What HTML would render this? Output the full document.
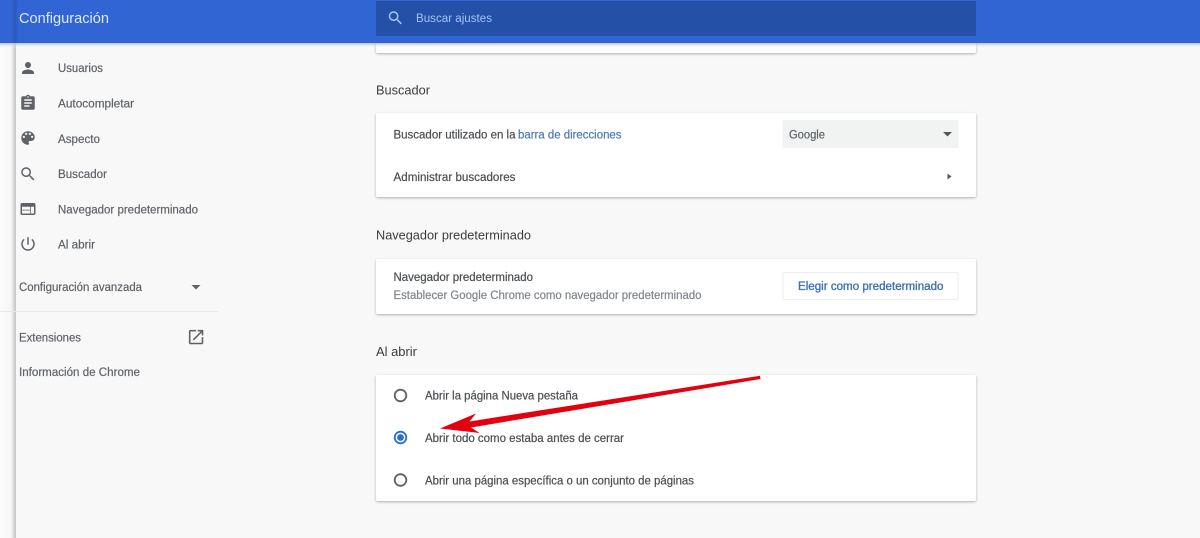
<!DOCTYPE html>
<html lang="es">
<head>
<meta charset="utf-8">
<title>Configuración</title>
<style>
html,body{margin:0;padding:0;background:#f8f8f8;overflow:hidden}
svg{display:block;filter:blur(.35px)}
text{font-family:"Liberation Sans",sans-serif;font-size:11.5px;fill:#5f6368;stroke:#5f6368;stroke-width:.2px}
.d{fill:#4a4d50;stroke:#4a4d50}
.h{font-size:13px;fill:#3c3c3c;stroke:none}
.i{fill:#5f6368;stroke:none}
</style>
</head>
<body>
<svg width="1200" height="538" viewBox="0 0 1200 538" xmlns="http://www.w3.org/2000/svg">
<defs>
<linearGradient id="edge" x1="0" x2="1" y1="0" y2="0">
<stop offset="0" stop-color="#fbfbfb"/><stop offset=".7" stop-color="#f6f6f6"/><stop offset=".82" stop-color="#dedede"/><stop offset="1" stop-color="#c4c4c4"/>
</linearGradient>
<linearGradient id="hshadow" x1="0" x2="0" y1="0" y2="1">
<stop offset="0" stop-color="#9aa3b5"/><stop offset="1" stop-color="#f8f8f8" stop-opacity="0"/>
</linearGradient>
<linearGradient id="hedge" x1="0" x2="1" y1="0" y2="0">
<stop offset="0" stop-color="#3367d6" stop-opacity="0"/><stop offset=".6" stop-color="#2a57b5"/><stop offset="1" stop-color="#2a57b5" stop-opacity="0"/>
</linearGradient>
<filter id="cs" x="-5%" y="-20%" width="110%" height="140%">
<feDropShadow dx="0" dy="1" stdDeviation="1.2" flood-color="#000" flood-opacity=".3"/>
</filter>
</defs>

<rect width="1200" height="538" fill="#f8f8f8"/>
<rect x="0" y="0" width="16" height="538" fill="url(#edge)"/>

<!-- cards -->
<rect x="376" y="20" width="600" height="33" rx="2" fill="#fff" filter="url(#cs)"/>
<rect x="376" y="113" width="600" height="84" rx="2" fill="#fff" filter="url(#cs)"/>
<rect x="376" y="259" width="600" height="55" rx="2" fill="#fff" filter="url(#cs)"/>
<rect x="376" y="375" width="600" height="126" rx="2" fill="#fff" filter="url(#cs)"/>

<!-- header -->
<rect x="0" y="42" width="1200" height="6" fill="url(#hshadow)"/>
<rect x="0" y="0" width="1200" height="43" fill="#3165d3"/>
<rect x="10" y="0" width="8" height="43" fill="url(#hedge)"/>
<rect x="376" y="1" width="600" height="35" fill="#2450a8"/>
<text x="19" y="23" textLength="90" lengthAdjust="spacingAndGlyphs" style="font-size:14.5px;fill:#dce9fb;stroke:none">Configuración</text>
<g transform="translate(386.5,9) scale(.75)"><path fill="#a5c4f2" d="M15.5 14h-.79l-.28-.27C15.41 12.59 16 11.11 16 9.5 16 5.91 13.09 3 9.5 3S3 5.91 3 9.5 5.91 16 9.5 16c1.61 0 3.09-.59 4.23-1.57l.27.28v.79l5 4.99L20.49 19l-4.99-5zm-6 0C7.01 14 5 11.99 5 9.5S7.01 5 9.5 5 14 7.01 14 9.5 11.99 14 9.5 14z"/></g>
<text x="416" y="22" textLength="76" lengthAdjust="spacingAndGlyphs" style="fill:#a5c4f2;stroke:none">Buscar ajustes</text>

<!-- sidebar icons -->
<g transform="translate(19,59) scale(.75)"><path class="i" d="M12 12c2.21 0 4-1.79 4-4s-1.79-4-4-4-4 1.79-4 4 1.79 4 4 4zm0 2c-2.67 0-8 1.34-8 4v2h16v-2c0-2.66-5.33-4-8-4z"/></g>
<g transform="translate(19,94) scale(.75)"><path class="i" d="M19 3h-4.18C14.4 1.84 13.3 1 12 1c-1.3 0-2.4.84-2.82 2H5c-1.1 0-2 .9-2 2v14c0 1.1.9 2 2 2h14c1.1 0 2-.9 2-2V5c0-1.1-.9-2-2-2zm-7 0c.55 0 1 .45 1 1s-.45 1-1 1-1-.45-1-1 .45-1 1-1zm2 14H7v-2h7v2zm3-4H7v-2h10v2zm0-4H7V7h10v2z"/></g>
<g transform="translate(19,129) scale(.75)"><path class="i" d="M12 3c-4.97 0-9 4.03-9 9s4.03 9 9 9c.83 0 1.5-.67 1.5-1.5 0-.39-.15-.74-.39-1.01-.23-.26-.38-.61-.38-.99 0-.83.67-1.5 1.5-1.5H16c2.76 0 5-2.24 5-5 0-4.42-4.03-8-9-8zm-5.500 9c-.83 0-1.5-.67-1.5-1.5S5.67 9 6.5 9 8 9.67 8 10.5 7.33 12 6.5 12zm3-4C8.67 8 8 7.33 8 6.5S8.67 5 9.5 5s1.5.67 1.5 1.5S10.33 8 9.5 8zm5 0c-.83 0-1.5-.67-1.5-1.5S13.67 5 14.5 5s1.5.67 1.5 1.5S15.33 8 14.5 8zm3 4c-.83 0-1.5-.67-1.5-1.5S16.67 9 17.5 9s1.5.67 1.5 1.5-.67 1.5-1.5 1.5z"/></g>
<g transform="translate(19,165) scale(.75)"><path class="i" d="M15.5 14h-.79l-.28-.27C15.41 12.59 16 11.11 16 9.5 16 5.91 13.09 3 9.5 3S3 5.91 3 9.5 5.91 16 9.5 16c1.61 0 3.09-.59 4.23-1.57l.27.28v.79l5 4.99L20.49 19l-4.99-5zm-6 0C7.01 14 5 11.99 5 9.5S7.01 5 9.5 5 14 7.01 14 9.5 11.99 14 9.5 14z"/></g>
<g transform="translate(19,200) scale(.75)"><path class="i" d="M20 4H4c-1.1 0-1.99.9-1.99 2L2 18c0 1.1.9 2 2 2h16c1.1 0 2-.9 2-2V6c0-1.1-.9-2-2-2zm-5 14H4v-4h11v4zm0-5H4V9h11v4zm5 5h-4V9h4v9z"/></g>
<g transform="translate(19,235) scale(.75)"><path class="i" d="M13 3h-2v10h2V3zm4.83 2.17l-1.42 1.42C17.99 7.86 19 9.81 19 12c0 3.87-3.13 7-7 7s-7-3.13-7-7c0-2.19 1.01-4.14 2.58-5.42L6.17 5.17C4.23 6.82 3 9.26 3 12c0 4.97 4.03 9 9 9s9-4.03 9-9c0-2.74-1.23-5.18-3.17-6.83z"/></g>
<g transform="translate(186.5,327.5) scale(.8)"><path class="i" d="M19 19H5V5h7V3H5c-1.11 0-2 .9-2 2v14c0 1.1.89 2 2 2h14c1.1 0 2-.9 2-2v-7h-2v7zM14 3v2h3.59l-9.83 9.83 1.41 1.41L19 6.41V10h2V3h-7z"/></g>
<path class="i" d="M191.5 285h9l-4.500 4.500z"/>

<!-- sidebar text -->
<text x="58" y="72" textLength="45" lengthAdjust="spacingAndGlyphs">Usuarios</text>
<text x="58" y="107.500" textLength="76" lengthAdjust="spacingAndGlyphs">Autocompletar</text>
<text x="58" y="143" textLength="42" lengthAdjust="spacingAndGlyphs">Aspecto</text>
<text x="58" y="178" textLength="49" lengthAdjust="spacingAndGlyphs">Buscador</text>
<text x="58" y="213.500" textLength="140" lengthAdjust="spacingAndGlyphs">Navegador predeterminado</text>
<text x="58" y="248.500" textLength="37" lengthAdjust="spacingAndGlyphs">Al abrir</text>
<text x="19" y="291" textLength="123" lengthAdjust="spacingAndGlyphs">Configuración avanzada</text>
<rect x="0" y="311" width="218" height="1" fill="#e8e8e8"/>
<text x="19" y="341.500" textLength="62" lengthAdjust="spacingAndGlyphs">Extensiones</text>
<text x="19" y="376" textLength="121" lengthAdjust="spacingAndGlyphs">Información de Chrome</text>

<!-- headings -->
<text class="h" x="376" y="94.500" textLength="54" lengthAdjust="spacingAndGlyphs">Buscador</text>
<text class="h" x="376" y="239.500" textLength="155" lengthAdjust="spacingAndGlyphs">Navegador predeterminado</text>
<text class="h" x="376" y="356" textLength="41" lengthAdjust="spacingAndGlyphs">Al abrir</text>

<!-- Buscador card -->
<text class="d" x="393.500" y="138.500" textLength="122" lengthAdjust="spacingAndGlyphs">Buscador utilizado en la</text>
<text x="518" y="138.500" textLength="103.500" lengthAdjust="spacingAndGlyphs" style="fill:#4b78b8;stroke:#4b78b8">barra de direcciones</text>
<rect x="782.500" y="120" width="176" height="28" rx="2" fill="#f1f3f3"/>
<text x="789" y="138.500" textLength="36" lengthAdjust="spacingAndGlyphs">Google</text>
<path d="M943 132h9l-4.500 4.500z" fill="#55585b"/>
<text class="d" x="393.500" y="181" textLength="122" lengthAdjust="spacingAndGlyphs">Administrar buscadores</text>
<path d="M947.500 173.500l4 3-4 3z" fill="#55585b"/>

<!-- Navegador card -->
<text class="d" x="393.500" y="281" textLength="139.500" lengthAdjust="spacingAndGlyphs">Navegador predeterminado</text>
<text x="393.500" y="299" textLength="308" lengthAdjust="spacingAndGlyphs" style="fill:#80868b;stroke:#80868b">Establecer Google Chrome como navegador predeterminado</text>
<rect x="783" y="272.500" width="175" height="27" rx="2" fill="#fff" stroke="#ebedf0"/>
<text x="798" y="290" textLength="145.500" lengthAdjust="spacingAndGlyphs" style="fill:#4070b4;stroke:#4070b4;stroke-width:.35px">Elegir como predeterminado</text>

<!-- Al abrir card -->
<circle cx="400.500" cy="395.500" r="5.800" fill="none" stroke="#5f6368" stroke-width="1.800"/>
<circle cx="400.500" cy="437.500" r="5.800" fill="none" stroke="#2a6fd0" stroke-width="1.800"/>
<circle cx="400.500" cy="437.500" r="3.400" fill="#2a6fd0"/>
<circle cx="400.500" cy="480" r="5.800" fill="none" stroke="#5f6368" stroke-width="1.800"/>
<text class="d" x="425" y="399.500" textLength="153" lengthAdjust="spacingAndGlyphs">Abrir la página Nueva pestaña</text>
<text class="d" x="425" y="442" textLength="199" lengthAdjust="spacingAndGlyphs">Abrir todo como estaba antes de cerrar</text>
<text class="d" x="425" y="484.500" textLength="269" lengthAdjust="spacingAndGlyphs">Abrir una página específica o un conjunto de páginas</text>

<!-- red arrow -->
<path d="M760 375.800L760.500 379L471 427.500L479.500 433L440 428.500L476 413.500L469.500 421.500Z" fill="#e3000f"/>
</svg>
</body>
</html>
